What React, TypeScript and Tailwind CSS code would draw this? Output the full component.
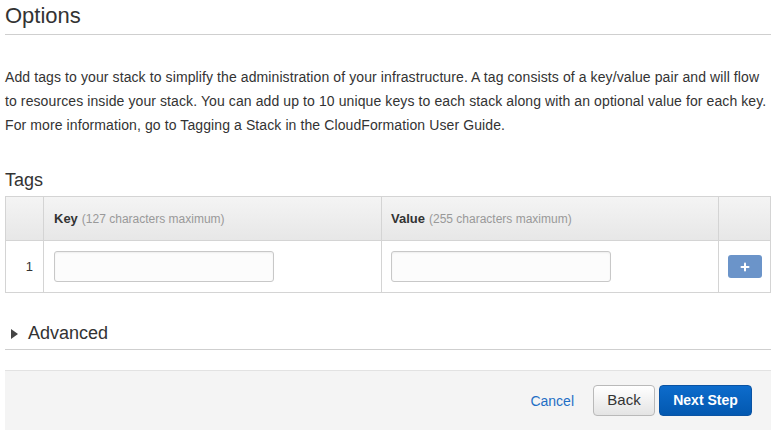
import { Plus } from 'lucide-react';

const font = { fontFamily: '"Liberation Sans", Arial, sans-serif' };

function TextBox() {
  return (
    <input
      type="text"
      className="w-[220px] h-[31px] rounded-[3px] border border-[#c8c8c8] bg-[#fcfcfc] px-2 text-[13px] shadow-[inset_0_1px_2px_rgba(0,0,0,0.06)] outline-none"
    />
  );
}

export default function App() {
  return (
    <div className="w-[779px] h-[438px] bg-white pl-[5px] pr-[8px] text-[#333] overflow-hidden" style={font}>
      {/* Page heading */}
      <h2 className="h-[35px] border-b border-[#cfcfcf] pt-[3px] text-[22px] leading-[26px] text-[#333]">Options</h2>

      <p className="mt-[30px] text-[14px] leading-[24px] text-[#333] tracking-[0.1px]">
        Add tags to your stack to simplify the administration of your infrastructure. A tag consists of a key/value pair and will flow
        to resources inside your stack. You can add up to 10 unique keys to each stack along with an optional value for each key.
        For more information, go to Tagging a Stack in the CloudFormation User Guide.
      </p>

      <h3 className="mt-[31px] text-[18px] leading-[24px] text-[#333]">Tags</h3>

      {/* Tags table */}
      <div className="mt-[4px] border border-[#d4d4d4]">
        <div className="grid grid-cols-[37px_338px_337px_1fr] h-[44px] bg-gradient-to-b from-[#f4f4f4] to-[#e7e7e7] border-b border-[#d4d4d4]">
          <div />
          <div className="border-l border-[#d4d4d4] flex items-center pl-[10px]">
            <span className="text-[13px] font-bold text-[#333]">Key</span>
            <span className="ml-[4px] text-[12px] text-[#999]">(127 characters maximum)</span>
          </div>
          <div className="border-l border-[#d4d4d4] flex items-center pl-[9px]">
            <span className="text-[13px] font-bold text-[#333]">Value</span>
            <span className="ml-[4px] text-[12px] text-[#999]">(255 characters maximum)</span>
          </div>
          <div className="border-l border-[#d4d4d4]" />
        </div>
        <div className="grid grid-cols-[37px_338px_337px_1fr] h-[51px]">
          <div className="flex items-center justify-end pr-[10px] text-[13px] text-[#333]">1</div>
          <div className="border-l border-[#d4d4d4] flex items-center pl-[10px]">
            <TextBox />
          </div>
          <div className="border-l border-[#d4d4d4] flex items-center pl-[9px]">
            <TextBox />
          </div>
          <div className="border-l border-[#d4d4d4] flex items-center justify-center">
            <button className="w-[34px] h-[23px] rounded-[3px] bg-[#6b94c9] flex items-center justify-center">
              <Plus size={12} strokeWidth={4} color="#ffffff" />
            </button>
          </div>
        </div>
      </div>

      {/* Advanced toggle */}
      <div className="mt-[27px] h-[30px] border-b border-[#cfcfcf] flex items-center">
        <svg width="7" height="10" viewBox="0 0 7 10" className="ml-[6px] -mt-[2px]">
          <path d="M0 0 L7 5 L0 10 Z" fill="#444" />
        </svg>
        <span className="ml-[10px] text-[18px] leading-[22px] text-[#333] -mt-[3px]">Advanced</span>
      </div>

      {/* Footer */}
      <div className="mt-[20px] h-[60px] bg-[#f4f4f4] border-t border-[#e2e2e2] flex items-center justify-end pr-[19px]">
        <a className="text-[14px] text-[#1f6fc5] mr-[19px] mt-[1px]">Cancel</a>
        <button className="w-[62px] h-[31px] rounded-[4px] border border-[#b9b9b9] bg-gradient-to-b from-[#ffffff] to-[#e4e4e4] text-[15px] text-[#333]">
          Back
        </button>
        <button className="ml-[4px] w-[93px] h-[31px] rounded-[4px] border border-[#0a53a3] bg-gradient-to-b from-[#0d6ccc] to-[#0358b0] text-[14px] font-bold text-white">
          Next Step
        </button>
      </div>
    </div>
  );
}
